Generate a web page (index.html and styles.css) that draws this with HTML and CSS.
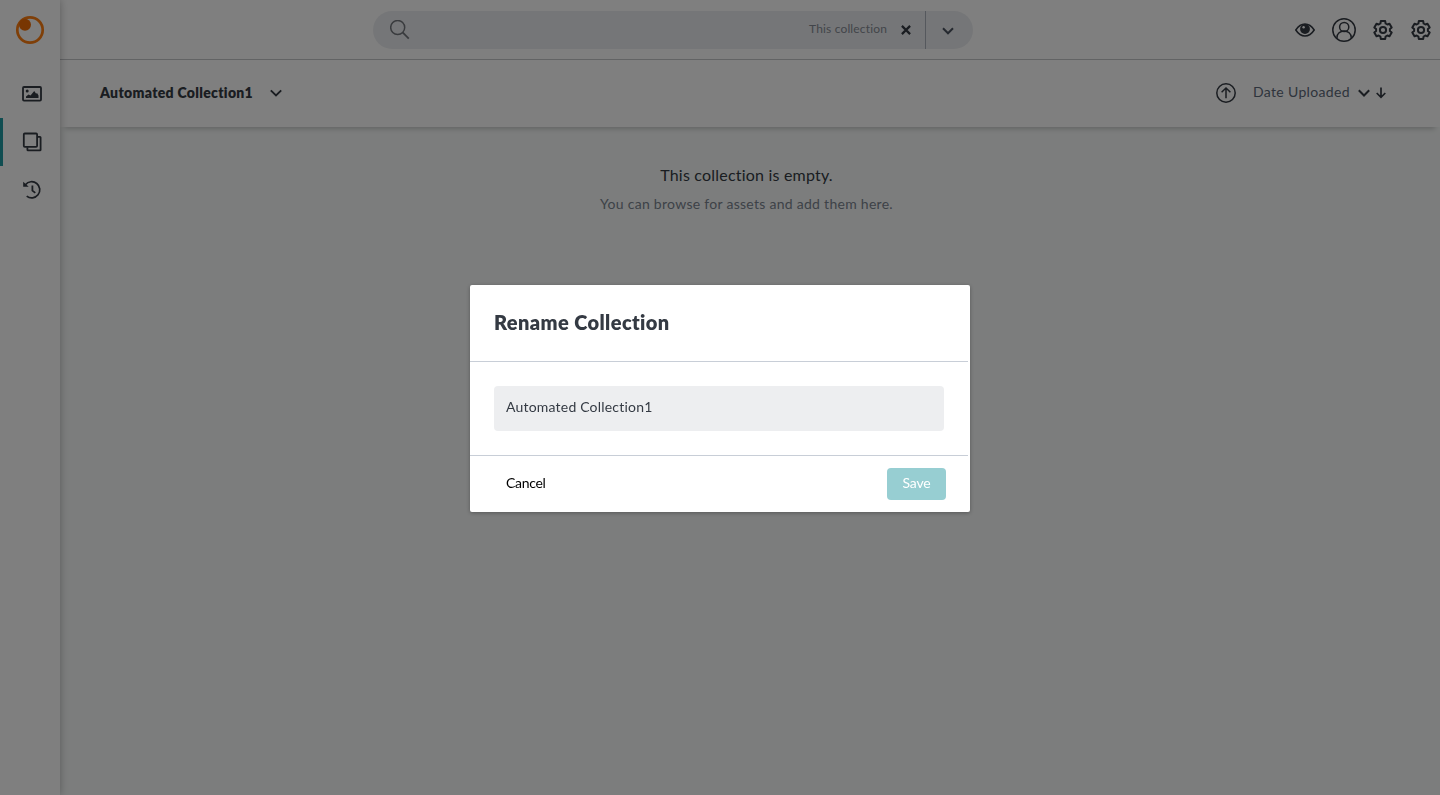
FILE: index.html
```html
<!DOCTYPE html>
<html lang="en">
<head>
<meta charset="utf-8">
<title>Automated Collection1</title>
<link rel="stylesheet" href="styles.css">
</head>
<body>
<div class="app">
  <aside class="sidebar">
    <a class="logo"><svg width="30" height="30" viewBox="0 0 30 30"><circle cx="15" cy="15" r="12.7" fill="none" stroke="currentColor" stroke-width="2.7"/><circle class="logo-dot" cx="10" cy="9.800" r="6"/></svg></a>
    <nav class="side-nav">
      <a class="side-item"><svg width="20" height="16" viewBox="0 0 20 16"><rect x="1" y="1" width="18" height="13.6" rx="1" fill="none" stroke="currentColor" stroke-width="1.8"/><circle cx="5.2" cy="5" r="1.5" fill="currentColor"/><path d="M4 12v-1.500l2.500-2 2 1 3.700-4.500 1.800 2.500 1.200-.3 1.300 2.300V12z" fill="currentColor"/></svg></a>
      <a class="side-item active"><svg width="20" height="20" viewBox="0 0 20 20" fill="none" stroke="currentColor" stroke-width="1.8"><rect x="1.800" y="1.500" width="13.300" height="13.300" rx="1"/><path d="M15.500 4.900H18q.6 0 .6.6v12.200q0 .6-.6.6H6q-.6 0-.6-.6v-2.400"/></svg></a>
      <a class="side-item"><svg width="20" height="20" viewBox="0 0 20 20" fill="none" stroke="currentColor" stroke-width="1.7"><path d="M3.400 4.700A8.100 8.100 0 1 1 4.700 16.200"/><path d="M10.400 5.500v5.100l2.900 2.300" stroke-width="1.8"/><path d="M1.200 1.800v5h5.500z" fill="currentColor" stroke="none"/></svg></a>
    </nav>
  </aside>
  <main class="main">
    <header class="topbar">
      <div class="search">
        <svg class="search-icon" width="20" height="20" viewBox="0 0 20 20" fill="none" stroke="currentColor" stroke-width="1.500"><circle cx="7.700" cy="7.500" r="7"/><path d="M12.600 12.400l6.200 6.300" stroke-width="1.800"/></svg>
        <span class="scope">This collection</span>
        <svg class="clear" width="10" height="10" viewBox="0 0 10 10" fill="none" stroke="currentColor" stroke-width="2.200"><path d="M.9.9l8.200 8.200M9.100.9L.9 9.100"/></svg>
        <span class="search-more"><svg width="12" height="8" viewBox="0 0 12 8" fill="none" stroke="currentColor" stroke-width="2"><path d="M1 1.300l5 5 5-5"/></svg></span>
      </div>
      <div class="tools">
        <svg width="20" height="20" viewBox="0 0 20 20"><path d="M.8 10Q4.600 4 10 4T19.200 10Q15.400 16 10 16T.8 10z" fill="none" stroke="currentColor" stroke-width="1.500"/><circle cx="10" cy="9" r="4.900" fill="currentColor"/><circle class="glint" cx="8.600" cy="7.300" r="1.200"/></svg>
        <svg width="24" height="24" viewBox="0 0 24 24" fill="none" stroke="currentColor" stroke-width="1.500"><circle cx="12" cy="12" r="11.200"/><circle cx="12.200" cy="9" r="4.600"/><path d="M5 20.500v-1.200a7.100 6.400 0 0 1 14.200 0v1.200"/></svg>
        <svg width="20" height="20" viewBox="0 0 20 20" fill="none" stroke="currentColor" stroke-width="2" stroke-linejoin="round"><path id="gear" d="M7.800 1.100h4.400l.4 2.400 1.700 1 2.200-.8 2.200 3.800-1.800 1.500v2l1.800 1.500-2.200 3.800-2.200-.8-1.700 1-.4 2.400H7.800l-.4-2.400-1.700-1-2.200.8-2.200-3.800L3.100 11V9L1.300 7.500l2.200-3.800 2.200.8 1.700-1z"/><circle cx="10" cy="10" r="3.100"/></svg>
        <svg class="gear-last" width="20" height="20" viewBox="0 0 20 20" fill="none" stroke="currentColor" stroke-width="2" stroke-linejoin="round"><use href="#gear"/><circle cx="10" cy="10" r="3.100"/></svg>
      </div>
    </header>
    <section class="titlebar">
      <h1 class="collection-name">Automated Collection1</h1>
      <svg class="title-chevron" width="12" height="8" viewBox="0 0 12 8" fill="none" stroke="currentColor" stroke-width="1.900"><path d="M.8 1.300L6 6.500l5.200-5.200"/></svg>
      <div class="sort">
        <svg width="20" height="20" viewBox="0 0 20 20" fill="none" stroke="currentColor" stroke-width="1.500"><circle cx="10" cy="10" r="9.200"/><path d="M10 15.300V5.300M5.600 9.300L10 5l4.400 4.300" /></svg>
        <span class="sort-label">Date Uploaded</span>
        <svg class="sort-chevron" width="12" height="8" viewBox="0 0 12 8" fill="none" stroke="currentColor" stroke-width="2"><path d="M.8 1.300L6 6.500l5.200-5.200"/></svg>
        <svg class="sort-arrow" width="10" height="12" viewBox="0 0 10 12" fill="none" stroke="currentColor" stroke-width="1.700"><path d="M5 .5v10M.7 6L5 10.300 9.300 6"/></svg>
      </div>
    </section>
    <section class="empty">
      <p class="empty-title">This collection is empty.</p>
      <p class="empty-hint">You can browse for assets and add them here.</p>
    </section>
  </main>
</div>
<div class="overlay">
  <div class="dialog" role="dialog">
    <div class="dialog-head"><h2 class="dialog-title">Rename Collection</h2></div>
    <div class="dialog-body"><div class="field">Automated Collection1</div></div>
    <div class="dialog-foot"><button class="cancel">Cancel</button><button class="save">Save</button></div>
  </div>
</div>
</body>
</html>
```
FILE: styles.css
```css
* { box-sizing: border-box; }
body { margin: 0; font-family: Lato, "Open Sans", sans-serif; color: #343a43; overflow: hidden; }
h1, h2, p { margin: 0; }
svg { display: block; flex: none; }
button { font: inherit; border: 0; }
.app { display: flex; height: 795px; background: #f8fbfa; }
.sidebar { width: 60px; background: #fff; box-shadow: 0 0 8px rgba(0,0,0,.28); z-index: 2; flex: none; padding-top: 15px; }
.logo { display: block; width: 30px; margin: 0 auto; color: #ff7f11; }
.logo-dot { fill: #f06c05; }
.side-nav { margin-top: 25px; }
.side-item { display: flex; height: 48px; align-items: center; justify-content: center; padding-left: 4px; }
.side-item.active { border-left: 3px solid #209ba3; padding-left: 1px; }
.main { flex: 1; display: flex; flex-direction: column; }
.topbar { height: 60px; background: #fff; border-bottom: 1px solid #c4c6c9; display: flex; align-items: center; justify-content: space-between; padding: 0 9px 0 313px; position: relative; z-index: 1; }
.search { width: 600px; height: 38px; border-radius: 19px; background: #ebedf0; display: flex; align-items: center; padding-left: 17px; }
.search-icon { color: #73777c; }
.scope { margin-left: auto; font-size: 12px; line-height: 16px; padding-bottom: 2px; letter-spacing: .15px; color: #858b94; }
.clear { margin: 1px 14px 0; }
.search-more { height: 38px; width: 48px; border-left: 1px solid #aab1ba; display: flex; align-items: center; padding: 2px 0 0 16px; color: #4b5360; }
.tools { display: flex; align-items: center; gap: 17px; }
.gear-last { margin-left: 1px; }
.glint { fill: #fff; }
.titlebar { height: 67px; background: #fff; box-shadow: 4px 0 #fff, -4px 0 #fff, 0 3px 5px -1px rgba(0,0,0,.2); clip-path: inset(0 -4px -10px); display: flex; align-items: center; margin: 0 4px; padding: 0 50px 2px 36px; }
.collection-name { font-size: 14px; font-weight: 800; letter-spacing: .31px; line-height: 20px; }
.title-chevron { margin-left: 17px; }
.sort { display: flex; align-items: center; margin-left: auto; }
.sort-label { margin: 0 8px 0 17px; font-size: 14px; line-height: 20px; padding-bottom: 1px; letter-spacing: .35px; color: #5d6979; }
.sort-arrow { margin-left: 6px; }
.empty { text-align: center; padding: 37px 7px 0 0; }
.empty-title { font-size: 16px; line-height: 22px; letter-spacing: .2px; }
.empty-hint { margin-top: 8px; font-size: 14px; line-height: 20px; letter-spacing: .28px; color: #7b8490; }
.overlay { position: fixed; inset: 0; background: rgba(0,0,0,.5); display: flex; align-items: flex-start; justify-content: center; padding-top: 285px; z-index: 5; }
.dialog { width: 500px; height: 227px; background: #fff; border-radius: 2px; box-shadow: 0 1px 4px rgba(0,0,0,.3); padding-right: 2px; }
.dialog-head { height: 77px; padding: 24px 24px 0; border-bottom: 1px solid #c8ced7; }
.dialog-title { font-size: 20px; font-weight: 800; line-height: 26px; letter-spacing: .4px; }
.dialog-body { height: 94px; padding: 24px; border-bottom: 1px solid #c8ced7; }
.field { height: 45px; background: #edeef0; border-radius: 4px; padding: 0 12px; font-size: 14px; line-height: 42px; letter-spacing: .2px; }
.dialog-foot { display: flex; justify-content: space-between; padding: 12px 22px 0 24px; }
.cancel, .save { height: 32px; font-size: 14px; line-height: 30px; padding: 0 12px 2px; background: transparent; color: #000; letter-spacing: -.3px; }
.save { width: 59px; background: #97ced2; color: #fff; border-radius: 4px; letter-spacing: -.15px; }
```
